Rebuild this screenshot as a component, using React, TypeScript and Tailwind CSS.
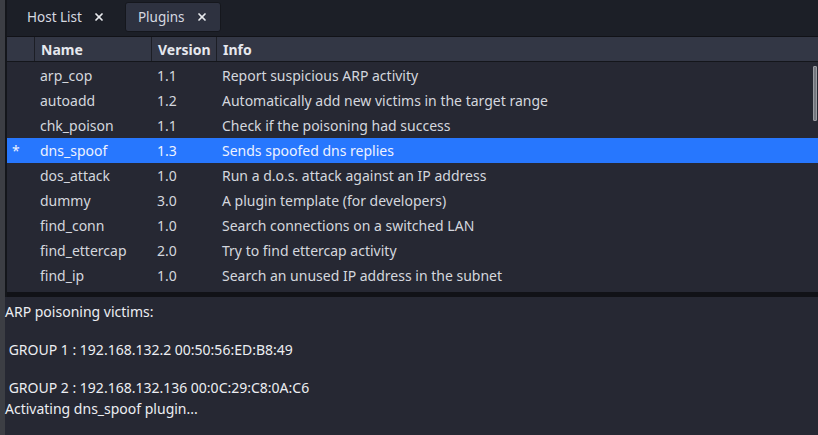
import { X } from 'lucide-react'

// ─── Dados ────────────────────────────────────────────────────────────────────
const plugins = [
  { name: 'arp_cop',      ver: '1.1', info: 'Report suspicious ARP activity',                 on: false },
  { name: 'autoadd',      ver: '1.2', info: 'Automatically add new victims in the target range', on: false },
  { name: 'chk_poison',   ver: '1.1', info: 'Check if the poisoning had success',             on: false },
  { name: 'dns_spoof',    ver: '1.3', info: 'Sends spoofed dns replies',                      on: true  },
  { name: 'dos_attack',   ver: '1.0', info: 'Run a d.o.s. attack against an IP address',      on: false },
  { name: 'dummy',        ver: '3.0', info: 'A plugin template (for developers)',             on: false },
  { name: 'find_conn',    ver: '1.0', info: 'Search connections on a switched LAN',           on: false },
  { name: 'find_ettercap', ver: '2.0', info: 'Try to find ettercap activity',                 on: false },
  { name: 'find_ip',      ver: '1.0', info: 'Search an unused IP address in the subnet',      on: false },
]

const log = [
  'ARP poisoning victims:',
  '',
  ' GROUP 1 : 192.168.132.2 00:50:56:ED:B8:49',
  '',
  ' GROUP 2 : 192.168.132.136 00:0C:29:C8:0A:C6',
  'Activating dns_spoof plugin...',
]

function Tab({ label, active }: { label: string; active?: boolean }) {
  return (
    <div
      className={`h-[30px] flex items-center gap-[11px] px-[12px] rounded-[3px] ${
        active ? 'bg-[#2e3240] border border-[#15171d]' : 'border border-transparent'
      }`}
    >
      <span className="text-[13.5px] text-[#d6d9e0]">{label}</span>
      <X size={12} strokeWidth={3.4} className="text-[#e8eaee]" />
    </div>
  )
}

export default function App() {
  return (
    <div
      className="w-[818px] h-[435px] flex bg-[#1c1f27] overflow-hidden"
      style={{ fontFamily: '"Noto Sans", sans-serif' }}
    >
      {/* borda esquerda */}
      <div className="w-[5px] bg-[#3c3e44] flex-shrink-0" />
      <div className="w-[2px] bg-[#14161b] flex-shrink-0" />

      <div className="flex-1 flex flex-col min-w-0">
        {/* Abas */}
        <div className="h-[36px] flex items-start pt-[2px] pl-[7px] gap-[7px] bg-[#1c1f27]">
          <Tab label="Host List" />
          <Tab label="Plugins" active />
        </div>
        <div className="h-px bg-[#111217]" />

        {/* Tabela */}
        <div className="h-[255px] flex flex-col bg-[#262833] relative">
          <div className="h-[25px] flex bg-[#333745] border-b border-[#14161b] text-[14px] font-bold text-[#e6e8ee]">
            <div className="w-[28px] border-r border-[#1c1e25]" />
            <div className="w-[117px] pl-[6px] flex items-center border-r border-[#1c1e25]">Name</div>
            <div className="w-[65px] pl-[6px] flex items-center border-r border-[#1c1e25]">Version</div>
            <div className="flex-1 pl-[6px] flex items-center">Info</div>
          </div>
          <div className="flex-1 overflow-hidden pt-px">
            {plugins.map(p => (
              <div
                key={p.name}
                className={`h-[25px] flex items-center text-[14px] ${
                  p.on ? 'bg-[#2777fe] text-[#eef2ff]' : 'text-[#d4d7de]'
                }`}
              >
                <div className="w-[28px] pl-[5px]">{p.on ? '*' : ''}</div>
                <div className="w-[117px] pl-[5px]">{p.name}</div>
                <div className="w-[65px] pl-[5px]">{p.ver}</div>
                <div className="flex-1 pl-[5px] whitespace-nowrap">{p.info}</div>
              </div>
            ))}
          </div>
          {/* barra de rolagem */}
          <div className="absolute right-[1px] top-[29px] w-[4px] h-[55px] rounded-[1px] bg-[#767880] border border-[#9a9ca2]" />
        </div>

        <div className="h-[5px] bg-[#111217]" />

        {/* Log */}
        <div className="flex-1 bg-[#262833] -ml-[2px] pt-[5px] text-[14px] leading-[19px] text-[#eceef2] whitespace-pre">
          {log.map((l, i) => (
            <div key={i} className={i === log.length - 1 ? 'h-[19px] mt-[2px]' : 'h-[19px]'}>{l}</div>
          ))}
        </div>
      </div>
    </div>
  )
}
